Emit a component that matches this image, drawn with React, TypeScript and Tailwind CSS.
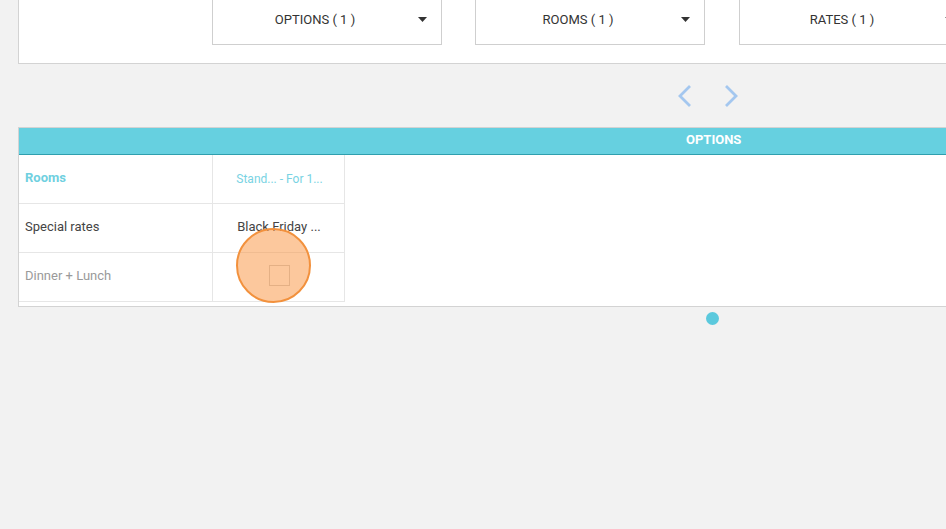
import React from "react";

function Caret() {
  return (
    <svg width="9" height="5" viewBox="0 0 9 5" className="absolute right-[14px] top-[17px]">
      <path d="M0 0 L9 0 L4.5 5 Z" fill="#333" />
    </svg>
  );
}

function FilterBox({ label, caret = true }: { label: string; caret?: boolean }) {
  return (
    <div className="relative w-[230px] h-[45px] shrink-0 border border-t-0 border-[#cfcfcf] bg-white">
      <div className="h-full flex items-center justify-center pr-[24px] pb-[4px] text-[13px] text-[#333]">
        {label}
      </div>
      {caret && <Caret />}
    </div>
  );
}

export default function App() {
  return (
    <div
      className="w-[946px] h-[529px] overflow-hidden bg-[#f2f2f2] relative"
      style={{ fontFamily: "Roboto, 'Liberation Sans', sans-serif" }}
    >
      {/* filter bar */}
      <div className="ml-[18px] h-[64px] bg-white border-l border-b border-[#d3d3d3] flex gap-[33px] pl-[193px]">
        <FilterBox label="OPTIONS ( 1 )" />
        <FilterBox label="ROOMS ( 1 )" />
        <div className="ml-[1px]">
          <FilterBox label="RATES ( 1 )" />
        </div>
      </div>

      {/* pager arrows */}
      <div className="h-[63px] flex items-center gap-[32px] pl-[677px]">
        <svg width="15" height="24" viewBox="0 0 15 24">
          <polyline points="13,2 3,12 13,22" fill="none" stroke="#a4c7ef" strokeWidth="2.8" />
        </svg>
        <svg width="15" height="24" viewBox="0 0 15 24">
          <polyline points="2,2 12,12 2,22" fill="none" stroke="#a4c7ef" strokeWidth="2.8" />
        </svg>
      </div>

      {/* options table */}
      <div className="ml-[18px] bg-white border-l border-t border-b border-[#d3d3d3] pb-[4px]">
        <div className="h-[27px] bg-[#66d0e0] border-b border-[#2f9fae] flex items-center pl-[667px] pb-[2px] text-[13px] font-bold text-white">
          OPTIONS
        </div>
        <div className="grid grid-cols-[194px_131px] w-[326px] border-r border-[#e6e6e6]">
          <div className="h-[49px] flex items-center pl-[6px] pb-[3px] text-[13px] font-bold text-[#6fd0e0] border-b border-r border-[#e6e6e6]">
            Rooms
          </div>
          <div className="h-[49px] flex items-center justify-center pl-[2px] pb-[1px] text-[12px] text-[#79d3e3] border-b border-[#e6e6e6]">
            Stand... - For 1...
          </div>
          <div className="h-[49px] flex items-center pl-[6px] pb-[2px] text-[13px] text-[#444] border-b border-r border-[#e6e6e6]">
            Special rates
          </div>
          <div className="h-[49px] flex items-center justify-center pl-[1px] pb-[2px] text-[13px] text-[#444] border-b border-[#e6e6e6]">
            Black Friday ...
          </div>
          <div className="h-[49px] flex items-center pl-[6px] pb-[2px] text-[13px] text-[#9a9a9a] border-b border-r border-[#e6e6e6]">
            Dinner + Lunch
          </div>
          <div className="h-[49px] flex items-center justify-center pl-[2px] pb-[3px] border-b border-[#e6e6e6]">
            <div className="w-[21px] h-[21px] border border-[#cfcfcf] bg-white" />
          </div>
        </div>
      </div>

      {/* click highlight */}
      <div className="absolute left-[236px] top-[228px] w-[75px] h-[75px] rounded-full bg-[#f9923c]/50 border-[2.5px] border-[#f2913d]" />

      {/* status dot */}
      <div className="absolute left-[706px] top-[312px] w-[13px] h-[13px] rounded-full bg-[#5bc9dd]" />
    </div>
  );
}
